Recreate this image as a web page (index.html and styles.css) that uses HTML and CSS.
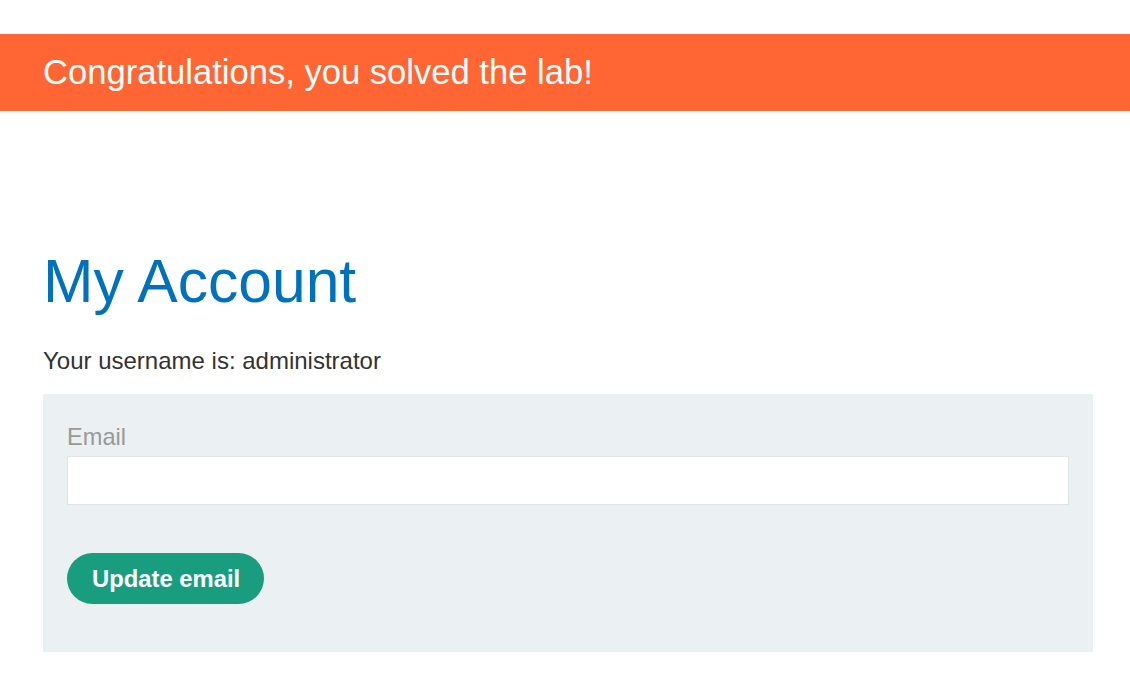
FILE: index.html
```html
<!DOCTYPE html>
<html lang="en">
<head>
<meta charset="utf-8">
<title>My Account</title>
<link rel="stylesheet" href="styles.css">
</head>
<body>
<div class="top-gap"></div>
<section class="solved-banner">
  <p class="solved-text">Congratulations, you solved the lab!</p>
</section>
<main class="container">
  <h1 class="page-title">My Account</h1>
  <p class="username">Your username is: administrator</p>
  <form class="email-form" onsubmit="return false;">
    <label class="field-label" for="email">Email</label>
    <input class="field-input" id="email" type="email" name="email">
    <button class="btn-primary" type="submit">Update email</button>
  </form>
</main>
</body>
</html>
```
FILE: styles.css
```css
* { box-sizing: border-box; }

html, body {
  margin: 0;
  padding: 0;
  background: #ffffff;
  font-family: "Liberation Sans", Arial, sans-serif;
  color: #333332;
}

.top-gap { height: 34px; }

.solved-banner {
  background: #ff6633;
  height: 77px;
  display: flex;
  align-items: center;
  padding: 0 43px;
}

.solved-text {
  margin: 0;
  color: #ffffff;
  font-size: 34.6px;
  line-height: 1.2;
}

.container {
  width: 1050px;
  margin-left: 43px;
  padding-top: 134px;
}

.page-title {
  margin: 0;
  font-weight: normal;
  font-size: 60.6px;
  line-height: 72px;
  color: #0071bc;
}

.username {
  margin: 29px 0 0;
  font-size: 24px;
  line-height: 29px;
  color: #333332;
}

.email-form {
  margin-top: 19px;
  background: #ebf0f2;
  padding: 29px 24px 48px;
  display: flex;
  flex-direction: column;
  align-items: flex-start;
}

.field-label {
  font-size: 23.6px;
  line-height: 28px;
  color: #999999;
  margin-bottom: 5px;
}

.field-input {
  width: 100%;
  height: 49px;
  border: 1px solid #e2e3e6;
  background: #ffffff;
  font-size: 20px;
  padding: 0 10px;
  margin: 0;
}

.btn-primary {
  margin-top: 48px;
  height: 51px;
  padding: 0 24px 0 25px;
  border: none;
  border-radius: 26px;
  background: #189e7f;
  color: #ffffff;
  font-family: "Liberation Sans", Arial, sans-serif;
  font-weight: bold;
  font-size: 23.8px;
  cursor: pointer;
}
```
